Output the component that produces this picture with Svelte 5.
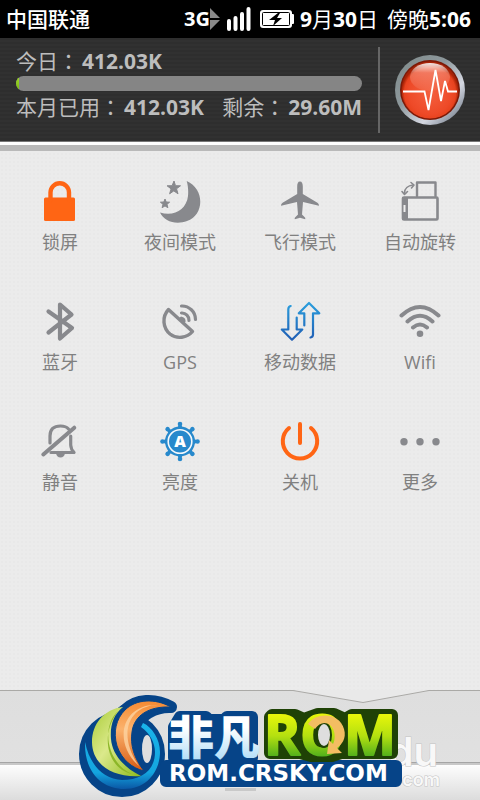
<script>
    const usage = { today: '412.03K', month: '412.03K', left: '29.60M', percent: 1 };

    const toggles = [
        { id: 'lock',       label: '锁屏',     tone: 'orange' },
        { id: 'night',      label: '夜间模式', tone: 'grey'   },
        { id: 'airplane',   label: '飞行模式', tone: 'grey'   },
        { id: 'rotate',     label: '自动旋转', tone: 'grey'   },
        { id: 'bluetooth',  label: '蓝牙',     tone: 'grey'   },
        { id: 'gps',        label: 'GPS',      tone: 'grey'   },
        { id: 'data',       label: '移动数据', tone: 'blue'   },
        { id: 'wifi',       label: 'Wifi',     tone: 'grey'   },
        { id: 'mute',       label: '静音',     tone: 'grey'   },
        { id: 'brightness', label: '亮度',     tone: 'blue'   },
        { id: 'power',      label: '关机',     tone: 'orange' },
        { id: 'more',       label: '更多',     tone: 'grey'   },
    ];

    const spokes = [0, 45, 90, 135, 180, 225, 270, 315];
</script>

<div class="screen">
    <header class="status">
        <span class="carrier">中国联通</span>
        <div class="status-right">
            <span class="network">3G</span>
            <svg class="updown" width="10" height="22" viewBox="0 0 10 22" aria-hidden="true">
                <path d="M0 0L10 10H0zM0 12H10L0 22z" fill="#8a8a8a" />
            </svg>
            <svg class="signal" width="26" height="26" viewBox="0 0 26 26" aria-hidden="true">
                <path d="M3 15v8M9.500 12v11M16 8v15M22.500 3v20" stroke="#fff" stroke-width="4" stroke-linecap="round" />
            </svg>
            <svg class="battery" width="34" height="18" viewBox="0 0 34 18" aria-hidden="true">
                <rect x="0" y="0" width="32" height="18" rx="3" fill="#fff" />
                <rect x="31" y="4" width="3" height="10" rx="1" fill="#fff" />
                <rect x="2.500" y="2.500" width="27" height="13" rx="1" fill="none" stroke="#000" />
                <path d="M18 3L9 10h6l-2 6 9-8h-5l3-5z" fill="#000" />
            </svg>
            <span class="date"><b>9</b>月<b>30</b>日</span>
            <span class="time">傍晚<b>5:06</b></span>
        </div>
    </header>

    <section class="traffic">
        <div class="usage">
            <div class="usage-row">
                <span>今日<i class="colon">：</i><b>{usage.today}</b></span>
            </div>
            <div class="bar"><div class="bar-fill" style="width: {usage.percent}%"></div></div>
            <div class="usage-row">
                <span>本月已用<i class="colon">：</i><b>{usage.month}</b></span>
                <span>剩余<i class="colon">：</i><b>{usage.left}</b></span>
            </div>
        </div>
        <div class="rule"></div>
        <button class="pulse" aria-label="加速">
            <svg width="70" height="70" viewBox="0 0 70 70">
                <defs>
                    <linearGradient id="rim" x1="0" y1="0" x2="1" y2="1">
                        <stop offset="0" stop-color="#7f8a8a" />
                        <stop offset="0.400" stop-color="#8d989c" />
                        <stop offset="0.680" stop-color="#d5d8e2" />
                        <stop offset="1" stop-color="#54606e" />
                    </linearGradient>
                    <radialGradient id="red" cx="0.5" cy="0.55" r="0.5">
                        <stop offset="0" stop-color="#f4603f" />
                        <stop offset="0.750" stop-color="#ee4a28" />
                        <stop offset="0.900" stop-color="#e8431f" />
                        <stop offset="1" stop-color="#a82206" />
                    </radialGradient>
                    <linearGradient id="gloss" x1="0" y1="0" x2="0" y2="1">
                        <stop offset="0" stop-color="#fff" stop-opacity="0.900" />
                        <stop offset="0.350" stop-color="#fff" stop-opacity="0.250" />
                        <stop offset="1" stop-color="#fff" stop-opacity="0.050" />
                    </linearGradient>
                </defs>
                <circle cx="35" cy="35" r="35" fill="url(#rim)" />
                <circle cx="35" cy="35" r="30" fill="#7c1a08" />
                <circle cx="35" cy="35" r="28.500" fill="url(#red)" />
                <ellipse cx="35" cy="22" rx="20" ry="14" fill="url(#gloss)" />
                <path d="M8 36.500H29.500L33.500 55 40.500 15 46 46 50 26 53 36.500H62" fill="none" stroke="#fff" stroke-width="1.800" />
            </svg>
        </button>
    </section>

    <main class="grid">
        {#each toggles as item}
            <button class="toggle {item.tone}" id="toggle-{item.id}">
                <svg class="icon" width="44" height="44" viewBox="0 0 44 44" aria-hidden="true">
                    {#if item.id === 'lock'}
                        <rect x="6" y="17.500" width="31" height="23.500" rx="1.500" fill="currentColor" />
                        <path d="M12.500 20V12.500a9.250 9.250 0 0 1 18.500 0V20" class="line" stroke-width="4.400" />
                    {:else if item.id === 'night'}
                        <path d="M28.700 1C47 9 46.500 35 29 41C18 45 6 41.500 2 32.500C16 37 28.500 29.500 30 16C30.500 10.500 30 5.500 28.700 1z" fill="currentColor" />
                        <path d="M16 1l1.500 4.700 5 .1-4 3 1.500 5-4.200-2.900-4.200 2.900 1.500-4.900-4-3.100 5-.1z" fill="currentColor" stroke="currentColor" stroke-linejoin="round" />
                        <path d="M7 19l1.200 3 3.400.2-2.600 2.100.9 3.400L7 25.900l-2.900 1.800.9-3.400-2.600-2.100 3.400-.2z" fill="currentColor" stroke="currentColor" stroke-linejoin="round" />
                    {:else if item.id === 'airplane'}
                        <path d="M22 1.500c-2 0-2.800 2-2.800 5v7.500L5 22.500c-1.500 1-2 2-2 3.300L19 22l1 12.500L17.500 37c-.7.700-1 1.500-.7 2.300l5.200-1.600 5.200 1.600c.3-.8 0-1.600-.7-2.300L24 34.500 25 22l16 3.800c0-1.300-.5-2.300-2-3.300L24.800 14V6.500c0-3-.8-5-2.800-5z" fill="currentColor" />
                    {:else if item.id === 'rotate'}
                        <path d="M19 16V2.500H37.500V16" class="line" stroke-width="2.400" />
                        <rect x="5" y="17.500" width="34.500" height="22" rx="1" class="line" stroke-width="2.600" />
                        <rect x="4" y="17" width="6" height="23" fill="currentColor" />
                        <rect x="5.500" y="25" width="2" height="7" fill="#eee" />
                        <path d="M6.500 13C6.500 8.500 10 5.500 15 5" class="line" stroke-width="1.600" />
                        <path d="M4 11.500L6.500 14.500 9.500 11.500M13 2.500L16 5 13.500 8" class="line" stroke-width="1.600" />
                    {:else if item.id === 'bluetooth'}
                        <path d="M10.500 11.500L34 28 22 38.500V4.500L33.500 14.500 10.500 32.500" class="line" stroke-width="4.200" />
                    {:else if item.id === 'gps'}
                        <path d="M10.500 9.500C3.500 17 5 28 12 34C19 39.500 29 38 34.500 31.500z" class="line" stroke-width="3.400" />
                        <path d="M20 19l3-2.500q5 1 4.500 5l-2 3z" fill="currentColor" />
                        <path d="M23.500 13a7 7 0 0 1 7.500 7.500M23.500 6a13.500 13.500 0 0 1 14 13.500" class="line" stroke-width="3.200" />
                    {:else if item.id === 'data'}
                        <linearGradient id="flow" x1="0" y1="0" x2="0" y2="44" gradientUnits="userSpaceOnUse">
                            <stop offset="0" stop-color="#2ba3e0" />
                            <stop offset="1" stop-color="#1e57b0" />
                        </linearGradient>
                        <g fill="none" stroke="url(#flow)" stroke-width="2.200" stroke-linecap="round" stroke-linejoin="round">
                            <path d="M12.700 6Q10.300 6.500 10.300 9.500V29.500H3.800L14 39.700 24.300 29.500H18.700V17.500" />
                            <path d="M26.300 25.500V13.300H20.800L31 3 41.300 13.300H35V34.500Q35 37 32.500 37.500" />
                        </g>
                    {:else if item.id === 'wifi'}
                        <path d="M3.500 15.500Q22 -1.500 40.500 15.500M9.500 21.500Q22 10 34.500 21.500M15 27.500Q22 21.500 29 27.500" class="line" stroke-width="4" />
                        <circle cx="22" cy="33.700" r="3.300" fill="currentColor" />
                    {:else if item.id === 'mute'}
                        <path d="M12 23V16Q12 6 22.500 6 28 6 30.500 9M32.700 16V25Q33 29.500 36 32.500H13" class="line" stroke-width="3.200" />
                        <path d="M18 33.500h9q-1 4-4.500 4t-4.500-4z" fill="currentColor" />
                        <path d="M36.300 7.700L5.300 34.500" class="line" stroke-width="4" />
                    {:else if item.id === 'brightness'}
                        {#each spokes as angle}
                            <g transform="rotate({angle} 22 21.500)">
                                <path d="M19 9L21 4H23L25 9z" fill="currentColor" />
                                <circle cx="22" cy="4" r="2.300" fill="currentColor" />
                            </g>
                        {/each}
                        <circle cx="22" cy="21.500" r="15" fill="currentColor" />
                        <circle cx="22" cy="21.500" r="11.800" fill="none" stroke="#f4f8fb" stroke-width="1.600" />
                        <text x="22" y="27" text-anchor="middle" class="auto">A</text>
                    {:else if item.id === 'power'}
                        <path d="M11 8A17.200 17.200 0 1 0 33 8M22 4V23" class="line" stroke-width="4" />
                    {:else}
                        <g fill="currentColor">
                            <circle cx="6" cy="21.700" r="3.700" />
                            <circle cx="22" cy="21.700" r="3.700" />
                            <circle cx="38" cy="21.700" r="3.700" />
                        </g>
                    {/if}
                </svg>
                <span class="label">{item.label}</span>
            </button>
        {/each}
    </main>

    <footer class="drawer">
        <button class="handle" aria-label="收起">
            <svg width="136" height="14" viewBox="0 0 136 14">
                <path d="M0 0V.5L70 12.500 136 .5V0z" fill="#e9e9e9" />
                <path d="M0 .5L70 12.500 136 .5" fill="none" stroke="#aaa9a6" />
            </svg>
        </button>
        <div class="tray"></div>

        <svg class="badge" width="364" height="108" viewBox="78 692 364 108" role="img" aria-label="非凡ROM">
            <defs>
                <linearGradient id="lime" x1="0" y1="715" x2="0" y2="757" gradientUnits="userSpaceOnUse">
                    <stop offset="0" stop-color="#e6f50a" />
                    <stop offset="0.500" stop-color="#b4e010" />
                    <stop offset="1" stop-color="#4fae1c" />
                </linearGradient>
                <linearGradient id="ice" x1="0" y1="714" x2="0" y2="759" gradientUnits="userSpaceOnUse">
                    <stop offset="0.300" stop-color="#fff" />
                    <stop offset="1" stop-color="#b5dff8" />
                </linearGradient>
                <linearGradient id="leaf" x1="0" y1="0" x2="1" y2="1">
                    <stop offset="0" stop-color="#a9cc36" />
                    <stop offset="0.450" stop-color="#dbe98b" />
                    <stop offset="1" stop-color="#8dbb1d" />
                </linearGradient>
                <linearGradient id="flame" x1="0" y1="0" x2="0" y2="1">
                    <stop offset="0" stop-color="#f58a32" />
                    <stop offset="0.400" stop-color="#fbb26c" />
                    <stop offset="1" stop-color="#d65a14" />
                </linearGradient>
                <linearGradient id="wave" x1="0" y1="0" x2="0" y2="1">
                    <stop offset="0" stop-color="#19b4ea" />
                    <stop offset="0.750" stop-color="#14a5df" />
                    <stop offset="1" stop-color="#0a57a5" />
                </linearGradient>
            </defs>

            <g class="ghost">
                <text x="438" y="766" text-anchor="end" class="ghost-big">du</text>
                <text x="440" y="786" text-anchor="end" class="ghost-small">com</text>
            </g>
            <rect x="225" y="788" width="31" height="3" fill="#c9c9c9" />

            <g fill="#064488" stroke="#064488" stroke-width="12" stroke-linejoin="round">
                <circle cx="122" cy="754" r="37" />
                <path d="M171 707C155 698 136 699 125 710L92 735 120 770 144 760 133 728Q148 706 171 707z" />
                <path d="M180 717H206L209 720H224L227 717H252V758H174V727z" />
                <rect x="166" y="766" width="230" height="15" />
            </g>
            <path d="M272 715H295L304 719 318 714H334L345 719 352 715H392V753H341L332 756H311L300 753H270V717z" fill="#1f4206" stroke="#1f4206" stroke-width="12" stroke-linejoin="round" />
            <ellipse cx="147" cy="749" rx="5" ry="14" fill="#dedede" />
            <path d="M85 742C84 773 103 789 124 789C148 789 160 770 160 752C160 739 152 727 143 723L141 727C150 733 155 743 155 752C155 771 141 780 122 780C104 779 90 766 85 742z" fill="url(#wave)" />
            <path d="M123 707C104 709 92 724 92 742C92 764 112 778 141 776C121 766 112 752 111 739C110 726 113 715 123 707z" fill="url(#leaf)" />
            <path d="M118 711C100 728 108 764 132 774C108 769 99 736 118 711z" fill="#8cb628" />
            <path d="M171 707C155 698 136 699 125 710C116 719 113 732 117 746C122 760 132 768 144 771C134 758 130 745 132 732C134 716 148 706 171 707z" fill="url(#flame)" stroke="#064488" stroke-width="1" />
            <path d="M158 705C130 705 116 733 139 766C112 742 122 703 158 705z" fill="#fdd3a1" opacity="0.800" />

            <text x="168" y="754" class="brand">非凡</text>
            <text x="264" y="755" class="rom">ROM</text>
            <ellipse cx="324" cy="735" rx="7" ry="12" fill="#dedede" stroke="#1f4206" stroke-width="2" />
            <path d="M308 724C317 711 340 713 344 729C347 739 341 745 337 748L342 753 327 754 329 740 333 744C336 738 335 729 330 725C325 721 319 723 315 729z" fill="#f3bd62" />
            <text x="169" y="781" class="site">ROM.CRSKY.COM</text>
        </svg>
    </footer>
</div>

<style>
    :global(body) {
        background: #e9e9e9;
    }

    .screen {
        display: flex;
        flex-direction: column;
        min-height: 100vh;
        font-family: "Open Sans", "Noto Sans CJK SC", sans-serif;
        color: #808080;
        background: radial-gradient(circle, #e8e8e8 1px, #ebebeb 1px) 0 0 / 4px 4px;
    }

    button {
        padding: 0;
        border: none;
        background: none;
        font-family: inherit;
        color: inherit;
        cursor: pointer;
    }

    svg {
        display: block;
        flex-shrink: 0;
    }

    .status {
        display: flex;
        align-items: center;
        justify-content: space-between;
        height: 38px;
        padding: 0 9px 0 6px;
        background: #000;
        color: #fff;
        font-size: 21px;
        line-height: 38px;
        white-space: nowrap;
    }

    .carrier {
        font-weight: 500;
    }

    .status-right {
        display: flex;
        align-items: center;
    }

    .network {
        font-size: 20px;
        font-weight: 700;
    }

    .signal {
        margin: 0 8px 0 6px;
    }

    .date {
        margin: 0 9px 0 6px;
    }

    .traffic {
        display: flex;
        align-items: center;
        height: 103px;
        padding: 0 15px 0 16px;
        background: repeating-linear-gradient(#2e2e2e 0 2px, #313131 2px 4px);
        border-bottom: 1px solid #777;
        box-shadow: 0 3px 0 #fff, 0 9px 0 #b9b9b9;
        color: #bdbdbd;
    }

    .usage {
        flex: 1;
        padding-bottom: 12px;
    }

    .usage-row {
        display: flex;
        justify-content: space-between;
        font-size: 21px;
        line-height: 30px;
        white-space: nowrap;
    }

    .colon {
        font-family: "Noto Sans CJK TC", sans-serif;
        font-style: normal;
        margin-right: 3px;
    }

    .bar {
        height: 15px;
        border-radius: 8px;
        background: #858585;
        overflow: hidden;
    }

    .bar-fill {
        height: 100%;
        background: linear-gradient(#a0dc28, #78b414);
    }

    .rule {
        width: 2px;
        height: 86px;
        margin: 0 15px 0 16px;
        background: #666;
    }

    .pulse {
        border-radius: 50%;
    }

    .grid {
        flex: 1;
        display: grid;
        grid-template-columns: repeat(4, 1fr);
        grid-auto-rows: 120px;
        padding-top: 20px;
    }

    .toggle {
        display: flex;
        flex-direction: column;
        align-items: center;
        padding-top: 18px;
        gap: 6px;
    }

    .grey { color: #88898d; }
    .orange { color: #ff6514; }
    .blue { color: #2789cc; }

    .line {
        fill: none;
        stroke: currentColor;
        stroke-linecap: round;
        stroke-linejoin: round;
    }

    .auto {
        fill: #fff;
        font-size: 16px;
        font-weight: 800;
    }

    .label {
        color: #808080;
        font-size: 18px;
        line-height: 24px;
    }

    .drawer {
        position: relative;
        background: linear-gradient(#dedede, #e2e2e2);
        border-top: 1px solid #aaa9a6;
    }

    .handle {
        display: flex;
        justify-content: flex-end;
        width: 100%;
        height: 71px;
        padding-right: 51px;
    }

    .handle svg {
        margin-top: -1px;
    }

    .tray {
        height: 37px;
        border-top: 1px solid #a5a5a5;
        box-shadow: inset 0 2px 0 #c8c8c8;
        background: linear-gradient(#fff, #dcdcdc);
    }

    .badge {
        position: absolute;
        right: 38px;
        bottom: 0;
        pointer-events: none;
    }

    .ghost {
        fill: #f8f8f8;
        stroke: #c4c4c4;
        stroke-width: 1px;
        paint-order: stroke;
        font-family: Inter, sans-serif;
    }

    .ghost-big {
        font-size: 40px;
        font-weight: 600;
    }

    .ghost-small {
        font-size: 18px;
        font-weight: 600;
    }

    .brand {
        font-family: "Noto Sans CJK SC", sans-serif;
        font-size: 46px;
        font-weight: 900;
        fill: url(#ice);
    }

    .rom {
        font-size: 55px;
        font-weight: 700;
        fill: url(#lime);
        stroke: url(#lime);
        stroke-width: 2px;
        stroke-linejoin: round;
    }

    .site {
        font-family: "DejaVu Sans", sans-serif;
        font-size: 23px;
        font-weight: 700;
        fill: #fff;
    }
</style>
